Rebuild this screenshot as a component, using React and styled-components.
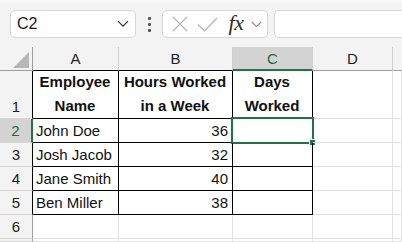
import styled, { createGlobalStyle } from "styled-components";

const GlobalStyle = createGlobalStyle`
  body {
    margin: 0;
    background: #f3f3f3;
    font-family: "Liberation Sans", Arial, sans-serif;
    overflow: hidden;
  }
`;

const Page = styled.div`
  width: 402px;
  height: 242px;
  background: #f3f3f3;
  overflow: hidden;
`;

const Toolbar = styled.div`
  height: 47px;
  box-sizing: border-box;
  padding: 10px 0 0 10px;
  display: flex;
  align-items: flex-start;
  background: linear-gradient(#fbfbfb 0, #f3f3f3 4px);
`;

const Box = styled.div`
  height: 28px;
  box-sizing: border-box;
  background: #fff;
  border: 1px solid #d6d6d6;
  border-radius: 5px;
  display: flex;
  align-items: center;
`;

const NameBox = styled(Box)`
  width: 126px;
  padding: 0 6px 0 6px;
  justify-content: space-between;
  font-size: 16px;
  color: #1b1b1b;
`;

const Dots = styled.div`
  width: 26px;
  height: 28px;
  display: flex;
  flex-direction: column;
  align-items: center;
  justify-content: center;
  gap: 3px;
  span {
    width: 3px;
    height: 3px;
    background: #555;
    border-radius: 1px;
  }
`;

const FxBox = styled(Box)`
  width: 106px;
  padding: 0 2px 0 6px;
`;

const IconSlot = styled.div`
  width: ${(p) => p.w}px;
  display: flex;
  justify-content: center;
  align-items: center;
`;

const Fx = styled.span`
  font-family: "Liberation Serif", "Times New Roman", serif;
  font-style: italic;
  font-size: 22px;
  line-height: 1;
  color: #2b2b2b;
  letter-spacing: -0.5px;
  margin-top: -2px;
`;

const FormulaInput = styled(Box)`
  flex: 1;
  margin-left: 6px;
  border-right: none;
  border-radius: 5px 0 0 5px;
`;

const Sheet = styled.div`
  display: grid;
  grid-template-columns: 33px 86px 114px 80px 80px 1fr;
  grid-template-rows: 24px 48px repeat(5, 24px) 1fr;
  height: 195px;
  background: #fff;
`;

const Cell = styled.div`
  box-sizing: border-box;
  border-right: 1px solid ${(p) => p.$rc || "#e1e1e1"};
  border-bottom: 1px solid ${(p) => p.$bc || "#e1e1e1"};
  font-size: 15px;
  color: #111;
  display: flex;
  align-items: ${(p) => (p.$bottom ? "flex-end" : "center")};
  justify-content: ${(p) => (p.$align === "right" ? "flex-end" : "flex-start")};
  padding: 0 4px 0 3px;
  white-space: nowrap;
  position: relative;
`;

const HeadCell = styled(Cell)`
  background: ${(p) => (p.$sel ? "#d3d3d3" : "#f3f3f3")};
  color: ${(p) => (p.$sel ? "#1e6b41" : "#222")};
  justify-content: center;
  padding: 0;
  font-size: 15px;
`;

const ColHead = styled(HeadCell)`
  border-right-color: #cfcfcf;
  border-bottom: ${(p) => (p.$sel ? "2px solid #217346" : `1px solid ${p.$bc || "#9e9e9e"}`)};
`;

const RowHead = styled(HeadCell)`
  border-bottom-color: #d6d6d6;
  border-right: ${(p) => (p.$sel ? "2px solid #217346" : `1px solid ${p.$rc || "#9e9e9e"}`)};
  padding-bottom: ${(p) => (p.$bottom ? "3px" : "0")};
`;

const Corner = styled(ColHead)`
  align-items: flex-end;
  justify-content: flex-end;
  padding: 0 3px 2px 0;
  border-right-color: #9e9e9e;
`;

const Title = styled.div`
  width: 100%;
  text-align: center;
  font-weight: 700;
  line-height: 24px;
`;

const Selection = styled.div`
  position: absolute;
  left: -2px;
  top: -2px;
  right: -2px;
  bottom: -2px;
  border: 2px solid #217346;
  pointer-events: none;
  &::after {
    content: "";
    position: absolute;
    right: -4px;
    bottom: -4px;
    width: 5px;
    height: 5px;
    background: #217346;
    border: 1px solid #fff;
  }
`;

const rows = [
  ["John Doe", 36],
  ["Josh Jacob", 32],
  ["Jane Smith", 40],
  ["Ben Miller", 38],
];

const Chevron = ({ size = 12, color = "#333" }) => (
  <svg width={size} height={size * 0.6} viewBox="0 0 12 7">
    <path d="M1 1 L6 6 L11 1" fill="none" stroke={color} strokeWidth="1.3" />
  </svg>
);

function Row({ n, name, hours, sel }) {
  return (
    <>
      <RowHead $sel={sel} $rc="#000">
        {n}
      </RowHead>
      <Cell $rc="#000" $bc="#000">
        {name}
      </Cell>
      <Cell $rc="#000" $bc="#000" $align="right">
        {hours}
      </Cell>
      <Cell $rc="#000" $bc="#000">
        {sel && <Selection />}
      </Cell>
      <Cell />
      <Cell />
    </>
  );
}

export default function App() {
  return (
    <Page>
      <GlobalStyle />
      <Toolbar>
        <NameBox>
          C2
          <Chevron />
        </NameBox>
        <Dots>
          <span />
          <span />
          <span />
        </Dots>
        <FxBox>
          <IconSlot w={22}>
            <svg width="16" height="16" viewBox="0 0 16 16">
              <path d="M1 1 L15 15 M15 1 L1 15" stroke="#b3b3b3" strokeWidth="1.2" />
            </svg>
          </IconSlot>
          <IconSlot w={32}>
            <svg width="21" height="15" viewBox="0 0 21 15">
              <path d="M1 7.5 L7.5 14 L20 1" fill="none" stroke="#b3b3b3" strokeWidth="1.2" />
            </svg>
          </IconSlot>
          <IconSlot w={26}>
            <Fx>fx</Fx>
          </IconSlot>
          <IconSlot w={14}>
            <Chevron size={11} color="#8a8a8a" />
          </IconSlot>
        </FxBox>
        <FormulaInput />
      </Toolbar>

      <Sheet>
        <Corner>
          <svg width="16" height="16" viewBox="0 0 16 16">
            <path d="M16 0 L16 16 L0 16 Z" fill="#b7b7b7" />
          </svg>
        </Corner>
        <ColHead $bc="#000">A</ColHead>
        <ColHead $bc="#000">B</ColHead>
        <ColHead $sel>C</ColHead>
        <ColHead>D</ColHead>
        <ColHead style={{ borderRight: "none" }} />

        <RowHead $bottom $rc="#000" style={{ alignItems: "flex-end" }}>
          1
        </RowHead>
        <Cell $rc="#000" $bc="#000" $bottom>
          <Title>
            Employee
            <br />
            Name
          </Title>
        </Cell>
        <Cell $rc="#000" $bc="#000" $bottom>
          <Title>
            Hours Worked
            <br />
            in a Week
          </Title>
        </Cell>
        <Cell $rc="#000" $bc="#000" $bottom>
          <Title>
            Days
            <br />
            Worked
          </Title>
        </Cell>
        <Cell />
        <Cell />

        {rows.map(([name, hours], i) => (
          <Row key={name} n={i + 2} name={name} hours={hours} sel={i === 0} />
        ))}

        <RowHead>6</RowHead>
        <Cell />
        <Cell />
        <Cell />
        <Cell />
        <Cell />

        <RowHead />
        <Cell />
        <Cell />
        <Cell />
        <Cell />
        <Cell />
      </Sheet>
    </Page>
  );
}
